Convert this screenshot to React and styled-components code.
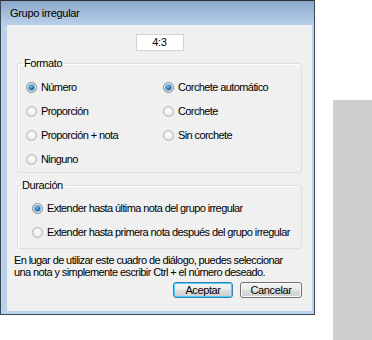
import React from "react";
import styled, { createGlobalStyle } from "styled-components";

const GlobalStyle = createGlobalStyle`
  html, body {
    margin: 0;
    padding: 0;
    background: #ffffff;
  }
  body {
    font-family: "Liberation Sans", Arial, sans-serif;
    font-size: 11px;
    color: #000;
  }
`;

const Stage = styled.div`
  display: flex;
  width: 372px;
  height: 340px;
  overflow: hidden;
`;

const Window = styled.div`
  width: 315px;
  height: 315px;
  box-sizing: border-box;
  border: 1px solid #3b4754;
  border-top-color: #2f2f2f;
  background: #bad2ec;
  display: flex;
  flex-direction: column;
  padding: 0 2px 3px 6px;
`;

const TitleBar = styled.div`
  height: 24px;
  margin: 0 -2px 0 -6px;
  padding-left: 9px;
  display: flex;
  align-items: center;
  background: linear-gradient(#8ba8ca, #b8d0ea);
  letter-spacing: -0.3px;
`;

const Client = styled.div`
  flex: 1;
  background: #f0f0f0;
  display: flex;
  flex-direction: column;
  padding: 9px 10px 0 10px;
`;

const RatioInput = styled.div`
  align-self: center;
  width: 46px;
  height: 15px;
  border: 1px solid #d4d4d4;
  background: #fff;
  text-align: center;
  line-height: 15px;
  letter-spacing: -0.3px;
`;

const Group = styled.fieldset`
  margin: ${({ $top }) => $top}px 0 0 0;
  padding: ${({ $pad }) => $pad};
  border: 1px solid #dadfe3;
  border-radius: 3px;
  box-shadow: inset 1px 1px 0 #fff;
  min-width: 0;
`;

const Legend = styled.legend`
  padding: 0 2px 0 1px;
  margin-left: ${({ $indent }) => $indent}px;
  letter-spacing: -0.4px;
  line-height: 12px;
`;

const Grid = styled.div`
  display: grid;
  grid-template-columns: 137px 1fr;
  grid-auto-rows: 24px;
`;

const List = styled.div`
  display: flex;
  flex-direction: column;
`;

const Option = styled.label`
  display: flex;
  align-items: center;
  gap: 4px;
  height: 24px;
  letter-spacing: -0.6px;
  white-space: nowrap;
`;

const Dot = styled.span`
  width: 11px;
  height: 11px;
  box-sizing: border-box;
  border-radius: 50%;
  border: 1px solid ${({ $on }) => ($on ? "#7a8a99" : "#b3b3b3")};
  background: radial-gradient(circle at 50% 40%, #fafafa 20%, #dadada 100%);
  display: flex;
  align-items: center;
  justify-content: center;
  flex: none;
  &::after {
    content: "";
    display: ${({ $on }) => ($on ? "block" : "none")};
    width: 5px;
    height: 5px;
    border-radius: 50%;
    background: radial-gradient(circle at 40% 35%, #7cc4ef 0%, #1a6db0 55%, #0d4478 100%);
    box-shadow: 0 0 0 1px #6fa8d6;
  }
`;

const Note = styled.p`
  margin: 5px -3px 0 -3px;
  line-height: 12px;
  letter-spacing: -0.6px;
  white-space: nowrap;
`;

const Buttons = styled.div`
  display: flex;
  justify-content: flex-end;
  gap: 7px;
  margin-top: 4px;
`;

const Button = styled.button`
  width: ${({ $w }) => $w}px;
  height: 16px;
  padding: 0;
  font: inherit;
  letter-spacing: -0.4px;
  color: #000;
  border-radius: 3px;
  border: 1px solid ${({ $focus }) => ($focus ? "#3c7fb1" : "#707070")};
  box-shadow: inset 0 0 0 1px ${({ $focus }) => ($focus ? "#48d1f9" : "#fcfcfc")};
  background: linear-gradient(#f2f2f2 0%, #ebebeb 50%, #dddddd 51%, #cfcfcf 100%);
`;

const SidePanel = styled.div`
  width: 39px;
  height: 240px;
  margin: 100px 0 0 18px;
  background: #cfcfcf;
`;

function Radio({ on, children }) {
  return (
    <Option>
      <Dot $on={on} />
      {children}
    </Option>
  );
}

export default function App() {
  return (
    <>
      <GlobalStyle />
      <Stage>
        <Window>
          <TitleBar>Grupo irregular</TitleBar>
          <Client>
            <RatioInput>4:3</RatioInput>
            <Group $top={6} $pad="6px 8px 1px 8px">
              <Legend $indent={-3}>Formato</Legend>
              <Grid>
                <Radio on>Número</Radio>
                <Radio on>Corchete automático</Radio>
                <Radio>Proporción</Radio>
                <Radio>Corchete</Radio>
                <Radio>Proporción + nota</Radio>
                <Radio>Sin corchete</Radio>
                <Radio>Ninguno</Radio>
              </Grid>
            </Group>
            <Group $top={6} $pad="5px 8px 4px 14px">
              <Legend $indent={-11}>Duración</Legend>
              <List>
                <Radio on>Extender hasta última nota del grupo irregular</Radio>
                <Radio>Extender hasta primera nota después del grupo irregular</Radio>
              </List>
            </Group>
            <Note>
              En lugar de utilizar este cuadro de diálogo, puedes seleccionar
              <br />
              una nota y simplemente escribir Ctrl + el número deseado.
            </Note>
            <Buttons>
              <Button $w={60} $focus>Aceptar</Button>
              <Button $w={62}>Cancelar</Button>
            </Buttons>
          </Client>
        </Window>
        <SidePanel />
      </Stage>
    </>
  );
}
